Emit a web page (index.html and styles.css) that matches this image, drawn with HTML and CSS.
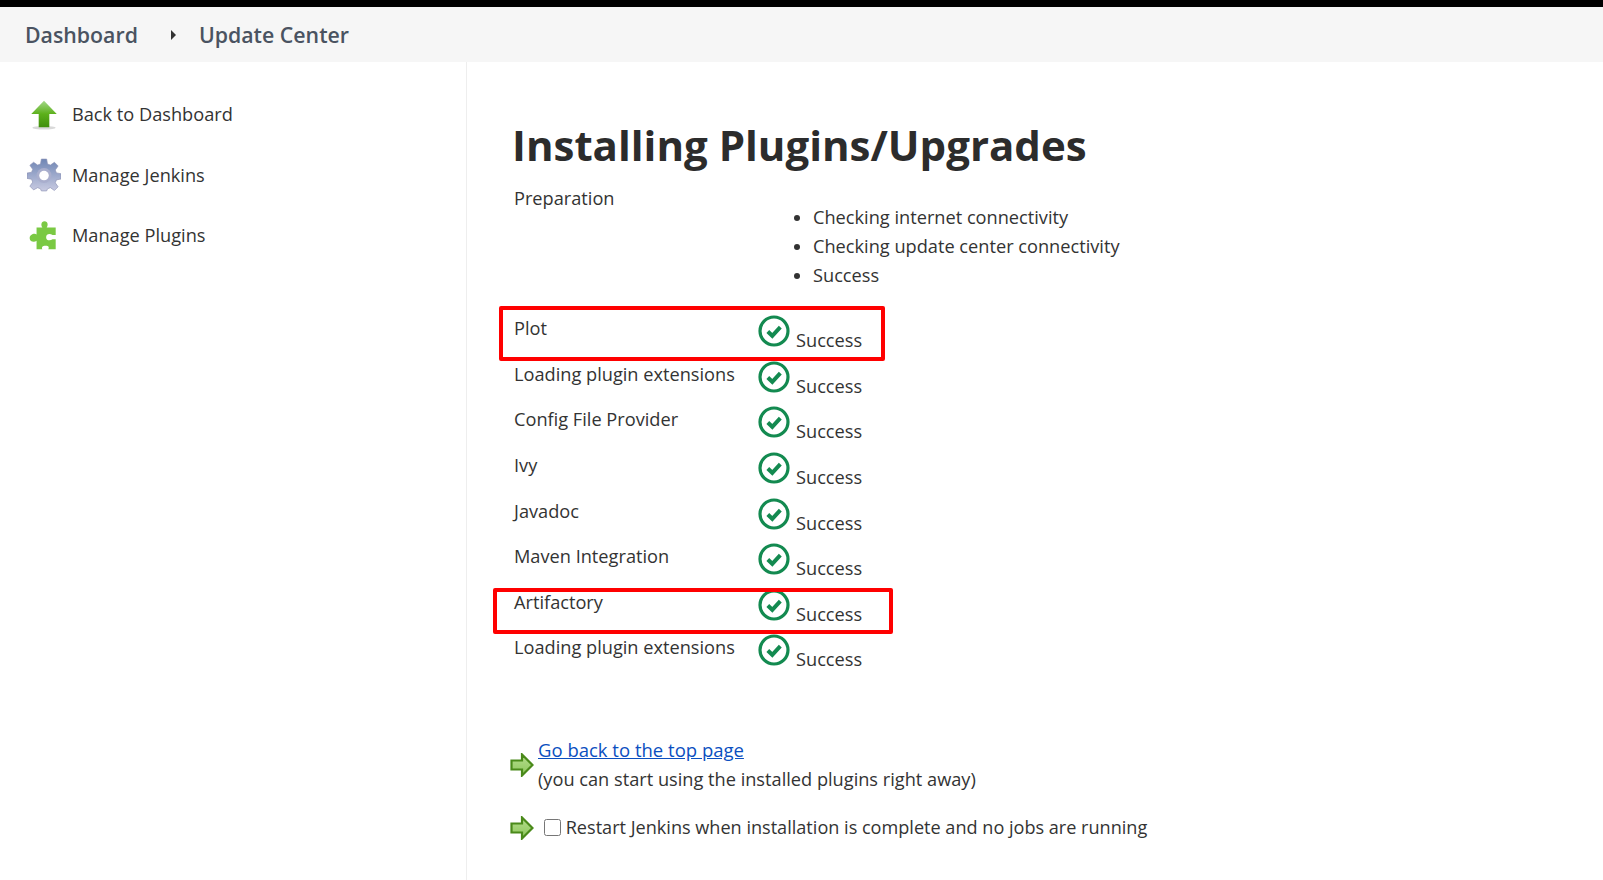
FILE: index.html
```html
<!DOCTYPE html>
<html lang="en">
<head>
  <meta charset="UTF-8" />
  <title>Update Center [Jenkins]</title>
  <link rel="stylesheet" href="styles.css">
</head>
<body>
  <svg class="defs" width="0" height="0">
    <defs>
      <linearGradient id="green-up" x1="0" y1="0" x2="0" y2="1">
        <stop offset="0" stop-color="#a4d88a"/>
        <stop offset="0.5" stop-color="#5cb01a"/>
        <stop offset="1" stop-color="#3f8f0c"/>
      </linearGradient>
      <linearGradient id="green-right" x1="0" y1="0" x2="0" y2="1">
        <stop offset="0" stop-color="#b6dd8e"/>
        <stop offset="1" stop-color="#8cc65a"/>
      </linearGradient>
      <linearGradient id="gear" x1="0" y1="0" x2="0" y2="1">
        <stop offset="0" stop-color="#6f86b4"/>
        <stop offset="1" stop-color="#c9cbe2"/>
      </linearGradient>
      <symbol id="check" viewBox="0 0 32 32">
        <circle cx="16" cy="16" r="14" fill="none" stroke="#138a50" stroke-width="3.2"/>
        <path d="M9.800 16.500l4.500 4.300 8-8.600" fill="none" stroke="#138a50" stroke-width="4"/>
      </symbol>
      <symbol id="arrow-right" viewBox="0 0 24 24">
        <path d="M1.500 7.500h10.500V1.500L22.500 12 12 22.500v-6H1.500z" fill="url(#green-right)" stroke="#4a8a1a" stroke-width="2.200"/>
      </symbol>
    </defs>
  </svg>

  <div class="topbar"></div>
  <nav class="breadcrumbs">
    <a href="#">Dashboard</a>
    <span class="crumb-sep"></span>
    <a href="#">Update Center</a>
  </nav>

  <div class="layout">
    <aside class="sidebar">
      <a class="task" href="#">
        <svg class="task-icon" viewBox="0 0 32 32">
          <ellipse cx="16" cy="29" rx="11" ry="1.600" fill="#d9d9d9"/>
          <path d="M16 3.500L28 16h-7v12.500H11V16H4z" fill="url(#green-up)"/>
        </svg>
        Back to Dashboard
      </a>
      <a class="task" href="#">
        <svg class="task-icon" viewBox="0 0 32 32">
          <path d="M13.500 1h5l.8 4.600 2.700 1.100L25.800 4l3.500 3.500-2.700 3.800 1.100 2.700 4.300.8v5l-4.300.8-1.100 2.700 2.700 3.800-3.500 3.500-3.800-2.700-2.700 1.100-.8 2h-5l-.8-2-2.700-1.100L6.200 30l-3.500-3.500 2.700-3.800-1.100-2.700-4.300-.8v-5l4.300-.8 1.100-2.700-2.700-3.800L6.200 4 10 6.700l2.700-1.100z" fill="url(#gear)" stroke="#8d93b5" stroke-width=".6"/>
          <circle cx="16" cy="16.500" r="7" fill="#a9aecd"/>
          <circle cx="16" cy="16.500" r="4.500" fill="#fff"/>
        </svg>
        Manage Jenkins
      </a>
      <a class="task" href="#">
        <svg class="task-icon" viewBox="0 0 32 32">
          <path d="M9 9h5.500c-1.500-2-1.500-6 2-6s3.500 4 2 6H27v7h-3c-2-1.500-6-1.500-6 2s4 3.500 6 2h3v9.500h-7c1-2 .5-3.500-2.500-3.500s-4 1.500-3 3.500H9v-8c-2 1.500-6.500 1-6.500-2.500S7 14 9 15.500z" fill="#7ac943"/>
        </svg>
        Manage Plugins
      </a>
    </aside>

    <main class="content">
      <h1>Installing Plugins/Upgrades</h1>

      <div class="jobs">
        <div class="prep">
          <div class="prep-name">Preparation</div>
          <ul class="prep-list">
            <li>Checking internet connectivity</li>
            <li>Checking update center connectivity</li>
            <li>Success</li>
          </ul>
        </div>

        <div class="job"><span class="job-name">Plot</span><svg class="check"><use href="#check"/></svg><span class="job-status">Success</span></div>
        <div class="job"><span class="job-name">Loading plugin extensions</span><svg class="check"><use href="#check"/></svg><span class="job-status">Success</span></div>
        <div class="job"><span class="job-name">Config File Provider</span><svg class="check"><use href="#check"/></svg><span class="job-status">Success</span></div>
        <div class="job"><span class="job-name">Ivy</span><svg class="check"><use href="#check"/></svg><span class="job-status">Success</span></div>
        <div class="job"><span class="job-name">Javadoc</span><svg class="check"><use href="#check"/></svg><span class="job-status">Success</span></div>
        <div class="job"><span class="job-name">Maven Integration</span><svg class="check"><use href="#check"/></svg><span class="job-status">Success</span></div>
        <div class="job"><span class="job-name">Artifactory</span><svg class="check"><use href="#check"/></svg><span class="job-status">Success</span></div>
        <div class="job"><span class="job-name">Loading plugin extensions</span><svg class="check"><use href="#check"/></svg><span class="job-status">Success</span></div>

        <div class="marked marked-plot"></div>
        <div class="marked marked-artifactory"></div>
      </div>

      <div class="next-step first-step">
        <svg class="next-icon"><use href="#arrow-right"/></svg>
        <div>
          <a class="back-link" href="#">Go back to the top page</a><br>
          (you can start using the installed plugins right away)
        </div>
      </div>
      <div class="next-step">
        <svg class="next-icon"><use href="#arrow-right"/></svg>
        <label class="restart"><input type="checkbox"> Restart Jenkins when installation is complete and no jobs are running</label>
      </div>
    </main>
  </div>
</body>
</html>
```

FILE: styles.css
```css
* {
  box-sizing: border-box;
}
body {
  margin: 0;
  font-family: "Open Sans", "Noto Sans", sans-serif;
  font-size: 18.200px;
  color: #333;
  background: #fff;
  height: 880px;
  overflow: hidden;
}
a {
  color: inherit;
  text-decoration: none;
}
.defs {
  position: absolute;
}
.topbar {
  height: 7px;
  background: #000;
}
.breadcrumbs {
  height: 55px;
  display: flex;
  align-items: center;
  padding-left: 25px;
  background: #f6f6f6;
  color: #4a5361;
  font-size: 21.300px;
  font-weight: 600;
}
.crumb-sep {
  width: 0;
  height: 0;
  margin: 0 23px 0 33px;
  border-left: 5px solid #333;
  border-top: 5px solid transparent;
  border-bottom: 5px solid transparent;
}
.layout {
  display: flex;
  height: 818px;
}
.sidebar {
  width: 467px;
  padding-top: 22px;
  border-right: 1px solid #eee;
}
.task {
  display: flex;
  align-items: center;
  gap: 11px;
  height: 60.500px;
  padding-left: 27px;
}
.task-icon {
  width: 34px;
  height: 34px;
}
.content {
  padding-left: 45px;
  flex: 1;
}
h1 {
  margin: 52px 0 0;
  font-size: 42px;
  line-height: 62px;
  font-weight: 700;
  color: #2c2c2c;
}
.jobs {
  position: relative;
  padding-left: 2px;
}
.prep {
  display: flex;
  margin-bottom: 24px;
}
.prep-name {
  width: 299px;
  line-height: 28px;
  padding-top: 8px;
}
.prep-list {
  margin: 27px 0 0;
  padding: 0;
  list-style: disc;
  line-height: 29px;
}
.job {
  display: flex;
  height: 45.650px;
}
.job-name {
  width: 244px;
  line-height: 28px;
}
.check {
  width: 32px;
  height: 32px;
  margin-top: 1px;
}
.job-status {
  margin: 12px 0 0 6px;
  line-height: 28px;
}
.marked {
  position: absolute;
  border: 4px solid #f00;
  border-radius: 2px;
}
.marked-plot {
  left: -13px;
  top: 130px;
  width: 386px;
  height: 55px;
}
.marked-artifactory {
  left: -19px;
  top: 412px;
  width: 400px;
  height: 46px;
}
.next-step {
  display: flex;
  align-items: center;
  margin-left: -2px;
  gap: 4px;
  line-height: 29px;
}
.first-step {
  margin-top: 56px;
  margin-bottom: 19px;
}
.next-icon {
  width: 24px;
  height: 24px;
}
.back-link {
  color: #0b4fc0;
  font-size: 18.500px;
  text-decoration: underline;
}
.restart {
  font-size: 18.100px;
}
.restart input {
  width: 17px;
  height: 17px;
  margin: 0 0 0 6px;
  vertical-align: -2px;
}
```
